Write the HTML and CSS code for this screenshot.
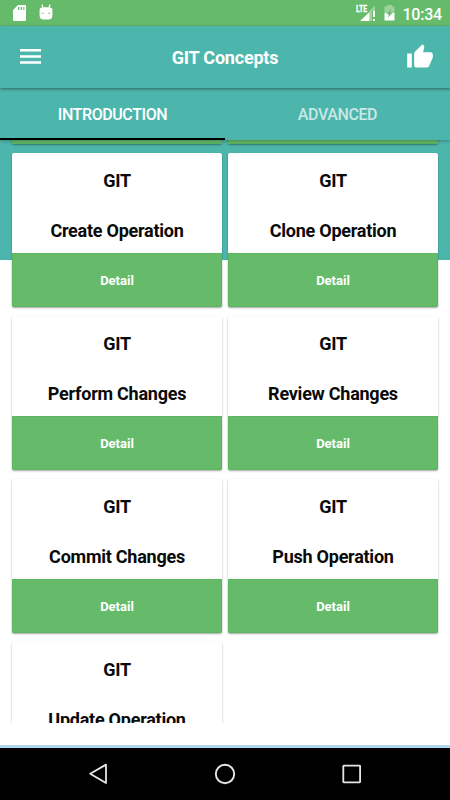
FILE: index.html
```html
<!DOCTYPE html>
<html lang="en">
<head>
    <meta charset="UTF-8">
    <meta name="viewport" content="width=device-width, initial-scale=1.0">
    <title>GIT Concepts</title>
    <link rel="stylesheet" href="styles.css">
</head>
<body>

<!-- Status bar -->
<div class="status-bar">
    <svg class="sd-icon" width="13" height="16" viewBox="0 0 13 16">
        <path fill="#fff" fill-rule="evenodd" d="M5 0H12Q13 0 13 1V15Q13 16 12 16H1Q0 16 0 15V5ZM5 2V5H6.3V2ZM7.7 2V5H9V2ZM10.3 2V5H11.4V2Z"/>
    </svg>
    <svg class="droid-icon" width="14" height="17" viewBox="0 0 14 17">
        <path stroke="#fff" stroke-width="1.2" d="M3 .5L4 4M11 .5L10 4"/>
        <path fill="#fff" d="M.6 6Q.6 3.2 4 3.2H10Q13.4 3.2 13.4 6V12Q13 15.6 9.5 15.6H4.5Q1 15.6 .6 12Z"/>
        <circle cx="3.8" cy="9.2" r=".8" fill="#66bb6a"/>
        <circle cx="10.2" cy="9.2" r=".8" fill="#66bb6a"/>
    </svg>
    <div class="status-right">
        <svg class="signal-icon" width="20" height="18" viewBox="0 0 20 18">
            <path fill="#fff" opacity=".35" d="M19 1.5V7H16V17H13.5V7Z"/>
            <path fill="#fff" d="M4 17L13.5 8V17ZM17 7H19V13H17ZM17 15H19V17H17Z"/>
            <text class="lte" x="0" y="8" textLength="11" lengthAdjust="spacingAndGlyphs">LTE</text>
        </svg>
        <svg class="battery-icon" width="11" height="16" viewBox="0 0 11 16">
            <path fill="#fff" opacity=".35" d="M3 0H8V1.5H10.5V8H.5V1.5H3Z"/>
            <path fill="#fff" d="M.5 8H10.5V15.5H.5Z"/>
            <path fill="#66bb6a" d="M7.6 3.5L6.2 7.8H8.6L3.6 13L5 9.3H2.4Z"/>
        </svg>
        <span class="clock">10:34</span>
    </div>
</div>

<!-- Toolbar -->
<div class="toolbar">
    <svg class="menu-icon" width="21" height="15" viewBox="0 0 21 15">
        <path fill="#fff" d="M0 0H21V2.6H0ZM0 6.2H21V8.8H0ZM0 12.2H21V14.8H0Z"/>
    </svg>
    <h1 class="title">GIT Concepts</h1>
    <svg class="like-icon" width="28" height="28" viewBox="0 0 24 24">
        <path fill="#fff" d="M1 21h4V9H1v12zm22-11c0-1.1-.9-2-2-2h-6.31l.95-4.57.03-.32c0-.41-.17-.79-.44-1.06L14.17 1 7.59 7.59C7.22 7.95 7 8.45 7 9v10c0 1.1.9 2 2 2h9c.83 0 1.54-.5 1.84-1.22l3.02-7.05c.09-.23.14-.47.14-.73v-2z"/>
    </svg>
</div>

<!-- Tabs -->
<div class="tabs">
    <div class="tab active">INTRODUCTION</div>
    <div class="tab">ADVANCED</div>
</div>

<!-- Cards -->
<div class="content">
    <div class="grid">
        <div class="card">
            <div class="card-body"></div>
            <div class="card-btn"></div>
        </div>
        <div class="card">
            <div class="card-body"></div>
            <div class="card-btn"></div>
        </div>
        <div class="card">
            <div class="card-body"><p>GIT</p><p>Create Operation</p></div>
            <div class="card-btn">Detail</div>
        </div>
        <div class="card">
            <div class="card-body"><p>GIT</p><p>Clone Operation</p></div>
            <div class="card-btn">Detail</div>
        </div>
        <div class="card">
            <div class="card-body"><p>GIT</p><p>Perform Changes</p></div>
            <div class="card-btn">Detail</div>
        </div>
        <div class="card">
            <div class="card-body"><p>GIT</p><p>Review Changes</p></div>
            <div class="card-btn">Detail</div>
        </div>
        <div class="card">
            <div class="card-body"><p>GIT</p><p>Commit Changes</p></div>
            <div class="card-btn">Detail</div>
        </div>
        <div class="card">
            <div class="card-body"><p>GIT</p><p>Push Operation</p></div>
            <div class="card-btn">Detail</div>
        </div>
        <div class="card">
            <div class="card-body"><p>GIT</p><p>Update Operation</p></div>
        </div>
    </div>
</div>

<!-- Navigation bar -->
<div class="nav-bar">
    <svg width="20" height="22" viewBox="0 0 20 22">
        <path fill="none" stroke="#e6e6e6" stroke-width="1.8" stroke-linejoin="round" d="M18 1.6V20L2.2 10.8Z"/>
    </svg>
    <svg width="22" height="22" viewBox="0 0 22 22">
        <circle cx="11" cy="11" r="9.2" fill="none" stroke="#e6e6e6" stroke-width="1.9"/>
    </svg>
    <svg width="20" height="20" viewBox="0 0 20 20">
        <rect x="1.3" y="1.7" width="16.8" height="16.6" rx=".5" fill="none" stroke="#e6e6e6" stroke-width="1.8"/>
    </svg>
</div>

</body>
</html>
```

FILE: styles.css
```css
/* Basic Reset */
* {
    box-sizing: border-box;
    margin: 0;
    padding: 0;
}

body {
    display: flex;
    flex-direction: column;
    height: 800px;
    overflow: hidden;
    background: #fff;
    font-family: Roboto, sans-serif;
}

svg {
    display: block;
    flex: none;
}

/* Status Bar */
.status-bar {
    display: flex;
    align-items: flex-start;
    height: 26px;
    padding: 4px 8px 0 13px;
    background: #66bb6a;
    color: #fff;
}

.sd-icon {
    margin-top: 1px;
}

.droid-icon {
    margin-left: 13px;
}

.status-right {
    display: flex;
    margin-left: auto;
}

.lte {
    font-size: 9px;
    font-weight: 700;
    fill: #fff;
    stroke: #fff;
    stroke-width: 0.3px;
}

.battery-icon {
    margin: 1px 7px 0 8px;
}

.clock {
    padding-top: 1px;
    font-size: 16px;
    font-weight: 500;
    line-height: 20px;
    letter-spacing: -0.2px;
}

/* Toolbar */
.toolbar {
    display: flex;
    align-items: center;
    justify-content: space-between;
    height: 61.5px;
    padding: 0 16px 0 20px;
    background: #4db6ac;
    box-shadow: 0 1px 3px rgba(0, 0, 0, 0.45);
    z-index: 2;
}

.title {
    margin-top: 2px;
    padding-left: 3px;
    font-size: 18px;
    font-weight: 700;
    letter-spacing: -0.2px;
    color: #fff;
}

/* Tabs */
.tabs {
    display: flex;
    height: 52.5px;
    background: #4db6ac;
    box-shadow: 0 1px 4px rgba(0, 0, 0, 0.3);
    z-index: 1;
}

.tab {
    flex: 1;
    padding-top: 1px;
    border-bottom: 2px solid transparent;
    text-align: center;
    font-size: 16px;
    font-weight: 500;
    line-height: 52px;
    letter-spacing: -0.4px;
    color: rgba(255, 255, 255, 0.7);
}

.tab.active {
    border-color: #000;
    color: #fff;
}

/* Card Grid */
.content {
    height: 583px;
    overflow: hidden;
    background: linear-gradient(#4db6ac 120px, #fff 120px);
}

.grid {
    display: grid;
    grid-template-columns: 210px 210px;
    gap: 9px 6px;
    justify-content: center;
    margin-top: -150px;
}

.card {
    height: 154px;
    border-radius: 2px;
    background: #fff;
    box-shadow: 0 1px 2px rgba(0, 0, 0, 0.35);
    overflow: hidden;
}

.card-body {
    height: 100px;
    padding-top: 3px;
    text-align: center;
    font-size: 18px;
    font-weight: 700;
    line-height: 50px;
    letter-spacing: -0.25px;
    color: #0a0a0a;
}

.card-btn {
    height: 54px;
    background: #66bb6a;
    border: 1px solid #5ab65f;
    text-align: center;
    font-size: 13px;
    font-weight: 700;
    line-height: 54px;
    color: #fff;
}

/* Navigation Bar */
.nav-bar {
    display: flex;
    align-items: center;
    justify-content: space-between;
    height: 55px;
    margin-top: auto;
    padding: 0 88px 0 88px;
    border-top: 3px solid #b0d6f2;
    background: #000;
}
```
